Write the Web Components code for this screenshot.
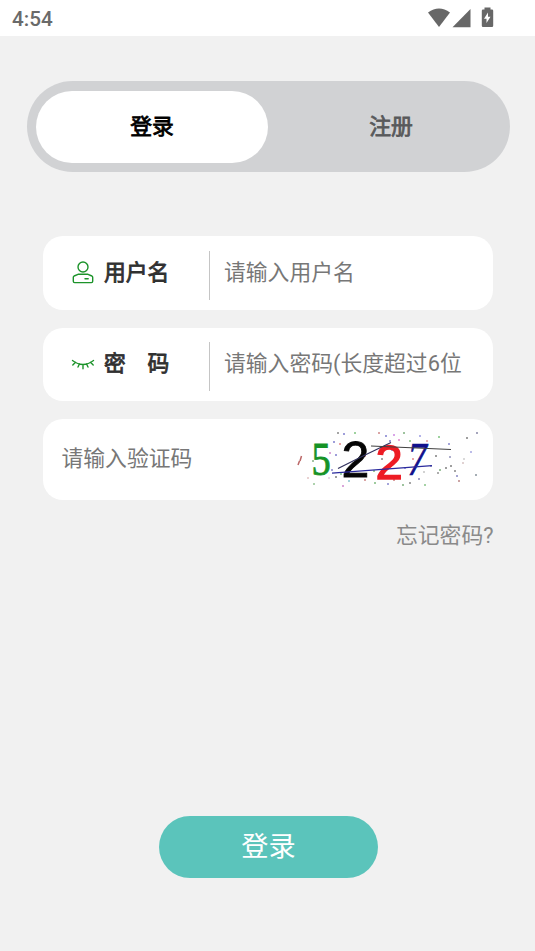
<!DOCTYPE html>
<html lang="zh-CN">
<head>
<meta charset="UTF-8">
<meta name="viewport" content="width=device-width, initial-scale=1.0">
<title>登录</title>
<style>
  body {
    margin: 0;
    background: #f1f1f1;
    font-family: Roboto, "Noto Sans CJK SC", sans-serif;
  }
</style>
</head>
<body>
<login-page></login-page>

<script>
class StatusBar extends HTMLElement {
  constructor() {
    super();
    const shadow = this.attachShadow({ mode: 'open' });
    shadow.innerHTML = `
      <style>
        :host {
          display: flex;
          justify-content: space-between;
          height: 36px;
          padding: 0 40px 0 12px;
          background: #fff;
          color: #6a6a6a;
          box-sizing: border-box;
        }
        .time {
          font-size: 20.7px;
          font-weight: 500;
          line-height: 38px;
        }
        svg { display: block; fill: #676767; }
      </style>
      <span class="time"><slot></slot></span>
      <svg width="68" height="36" viewBox="0 0 68 36">
        <path d="M1 12.5Q12 4.5 23 12.5L12 27Z"/>
        <path d="M43.5 9v18.2H25.5Z"/>
        <path fill-rule="evenodd" d="M57.5 7.5h6v2H65q1.2 0 1.2 1.2v15.1q0 1.2-1.2 1.2h-9q-1.2 0-1.2-1.2V10.7q0-1.2 1.2-1.2H57.5ZM61 12.5l-4 6.3h2.5v4.2l4-6.2h-2.5Z"/>
      </svg>
    `;
  }
}

class TabSwitch extends HTMLElement {
  constructor() {
    super();
    const shadow = this.attachShadow({ mode: 'open' });
    shadow.innerHTML = `
      <style>
        :host {
          display: flex;
          height: 91px;
          padding: 10px 0 9px 9px;
          border-radius: 46px;
          background: #d1d2d4;
          box-sizing: border-box;
          font-size: 21.8px;
          -webkit-text-stroke: .8px;
          line-height: 71px;
          text-align: center;
        }
        .tab { flex: 1; padding-left: 4px; color: #58595b; }
        .active {
          flex: 0 0 232px;
          padding: 0;
          border-radius: 36px;
          background: #fff;
          color: #000;
        }
      </style>
      <div class="tab active"><slot name="active"></slot></div>
      <div class="tab"><slot name="other"></slot></div>
    `;
  }
}

class FormRow extends HTMLElement {
  constructor() {
    super();
    const shadow = this.attachShadow({ mode: 'open' });
    shadow.innerHTML = `
      <style>
        :host {
          display: flex;
          align-items: center;
          border-radius: 20px;
          background: #fff;
          box-sizing: border-box;
          white-space: nowrap;
          font-size: 21.8px;
          line-height: 32px;
        }
        .label {
          display: flex;
          align-items: center;
          width: 167px;
          height: 49px;
          margin-top: 5px;
          padding-left: 28px;
          border-right: 1px solid #c5c5c5;
          box-sizing: border-box;
          color: #303030;
        }
        .label b {
          margin: -5px 0 0 9px;
          font-weight: 400;
          -webkit-text-stroke: .8px;
        }
        .hint { margin: 0 0 0 14px; color: #777; }
      </style>
      <div class="label"><slot name="icon"></slot><b><slot name="label"></slot></b></div>
      <span class="hint"><slot></slot></span>
    `;
  }
}

class LineIcon extends HTMLElement {
  constructor() {
    super();
    this.attachShadow({ mode: 'open' });
  }

  connectedCallback() {
    const shapes = {
      user: '<circle cx="12" cy="7" r="5"/><path d="M7 14.3h10l3.900 1.700q.800.500.800 1.400v3.900q0 1.300-1.300 1.300h-16.800q-1.300 0-1.300-1.300v-3.900q0-.900.800-1.400ZM14 18.800h3.200"/>',
      eye: '<path d="M1.500 8.500Q12 16.500 22.500 8.500M4.500 10.300l-2.700 2.700M8.400 12L7 15M12 12.500v4.200M15.600 12L17 15M19.500 10.300l2.700 2.700"/>'
    };
    this.shadowRoot.innerHTML = `
      <style>
        :host { display: block; width: 24px; height: 26px; margin-top: -4px; }
        svg {
          display: block;
          fill: none;
          stroke: #1c932a;
          stroke-width: 1.4;
          stroke-linecap: round;
          stroke-linejoin: round;
        }
      </style>
      <svg width="24" height="26" viewBox="0 0 24 26">${shapes[this.getAttribute('name')]}</svg>
    `;
  }
}

class CaptchaImage extends HTMLElement {
  constructor() {
    super();
    // 干扰点: x, y, 颜色
    const dots = [
      [45,4,'#333'],[51,5,'#22a'],[62,4,'#292'],[86,4,'#a33'],[93,7,'#22a'],[101,6,'#a3c'],[111,4,'#272'],
      [41,13,'#22a'],[47,15,'#c33'],[91,18,'#555'],[97,12,'#22a'],[106,11,'#c3a'],[117,12,'#393'],
      [127,7,'#55c'],[134,12,'#c55'],[146,8,'#292'],[156,15,'#33a'],[174,9,'#222'],[184,4,'#336'],
      [37,24,'#a3a'],[43,26,'#22a'],[72,27,'#a33'],[89,30,'#333'],[120,30,'#c33'],[143,27,'#222'],
      [157,28,'#448'],[171,30,'#aaa'],[178,23,'#66c'],[170,34,'#b99'],[20,32,'#373'],
      [39,41,'#33a'],[48,45,'#293'],[64,47,'#a3a'],[81,42,'#282'],[112,39,'#33c'],
      [138,37,'#338'],[147,41,'#272'],[153,39,'#222'],[158,37,'#222'],[162,42,'#333'],[164,47,'#339'],[166,52,'#833'],
      [15,49,'#c99'],[21,55,'#494'],[36,49,'#cac'],[43,48,'#222'],[56,52,'#39a'],[72,51,'#a33'],
      [82,54,'#282'],[95,55,'#33a'],[101,51,'#a22'],[110,56,'#272'],[126,50,'#338'],[132,56,'#393'],
      [145,44,'#444'],[183,46,'#345'],[50,57,'#a3a'],[117,54,'#333'],[131,43,'#999'],[99,21,'#33a']
    ].map(([x, y, c]) => `<circle cx="${x}" cy="${y}" r=".8" fill="${c}"/>`).join('');
    const shadow = this.attachShadow({ mode: 'open' });
    shadow.innerHTML = `
      <style>
        :host { display: block; }
        svg { display: block; }
        .serif { font-family: "Liberation Serif", serif; }
        .sans { font-family: "Liberation Sans", sans-serif; }
      </style>
      <svg width="190" height="62" viewBox="0 0 190 62">
        ${dots}
        <path d="M8.500 27l-1.500 5M6.500 32l-1.500 4" stroke="#b66" stroke-width="1.5"/>
        <text class="serif" transform="translate(18.5 45.5) scale(.84 1)" font-size="46" fill="#159326" stroke="#159326" stroke-width=".8">5</text>
        <text class="sans" x="48.5" y="48" font-size="50" fill="#050505" stroke="#050505" stroke-width=".8">2</text>
        <text class="sans" x="82.5" y="50" font-size="49" fill="#ed1c24" stroke="#ed1c24" stroke-width="1.4">2</text>
        <text class="serif" transform="translate(114.5 45.5) scale(.84 1)" font-size="46" font-style="italic" fill="#10108c" stroke="#10108c" stroke-width=".7">7</text>
        <path d="M45 39.500L70 27L98 13.500" fill="none" stroke="#30305d" stroke-width="1.2"/>
        <path d="M78 17L158 20.500" stroke="#404040" stroke-width="1.2"/>
        <path d="M39 44.200L139 36.700" stroke="#2a2a9d" stroke-width="1.3"/>
      </svg>
    `;
  }
}

class CaptchaRow extends HTMLElement {
  constructor() {
    super();
    const shadow = this.attachShadow({ mode: 'open' });
    shadow.innerHTML = `
      <style>
        :host {
          display: flex;
          align-items: center;
          justify-content: space-between;
          padding: 0 10px 0 18.5px;
          border-radius: 20px;
          background: #fff;
          box-sizing: border-box;
          color: #777;
          font-size: 21.8px;
          line-height: 32px;
        }
        .hint { margin-top: -1px; }
      </style>
      <span class="hint"><slot></slot></span>
      <captcha-image></captcha-image>
    `;
  }
}

class SubmitButton extends HTMLElement {
  constructor() {
    super();
    const shadow = this.attachShadow({ mode: 'open' });
    shadow.innerHTML = `
      <style>
        :host { display: block; }
        button {
          display: block;
          width: 219px;
          height: 62px;
          padding: 0;
          border: 0;
          border-radius: 31px;
          background: #5bc4bb;
          color: #fff;
          font: inherit;
          font-size: 27.2px;
          line-height: 62px;
          cursor: pointer;
        }
      </style>
      <button type="button"><slot></slot></button>
    `;
  }
}

class LoginPage extends HTMLElement {
  constructor() {
    super();
    const shadow = this.attachShadow({ mode: 'open' });
    shadow.innerHTML = `
      <style>
        :host {
          display: flex;
          flex-direction: column;
          height: 951px;
          overflow: hidden;
        }
        tab-switch { margin: 45px 25px 0 27px; }
        .form {
          display: grid;
          grid-template-rows: 73.5px 72.5px 81px;
          gap: 18.5px;
          margin: 64px 42px 0 43px;
        }
        .forgot {
          margin: 20px 41.5px 0 0;
          color: #8a8a8a;
          font-size: 21.8px;
          line-height: 32px;
          text-align: right;
        }
        submit-button { margin: auto 0 73px 159px; }
      </style>
      <status-bar>4:54</status-bar>
      <tab-switch>
        <span slot="active">登录</span>
        <span slot="other">注册</span>
      </tab-switch>
      <div class="form">
        <form-row>
          <line-icon slot="icon" name="user"></line-icon>
          <span slot="label">用户名</span>
          请输入用户名
        </form-row>
        <form-row>
          <line-icon slot="icon" name="eye"></line-icon>
          <span slot="label">密　码</span>
          请输入密码(长度超过6位
        </form-row>
        <captcha-row>请输入验证码</captcha-row>
      </div>
      <div class="forgot">忘记密码?</div>
      <submit-button>登录</submit-button>
    `;
  }
}

customElements.define('status-bar', StatusBar);
customElements.define('tab-switch', TabSwitch);
customElements.define('form-row', FormRow);
customElements.define('line-icon', LineIcon);
customElements.define('captcha-image', CaptchaImage);
customElements.define('captcha-row', CaptchaRow);
customElements.define('submit-button', SubmitButton);
customElements.define('login-page', LoginPage);
</script>
</body>
</html>
